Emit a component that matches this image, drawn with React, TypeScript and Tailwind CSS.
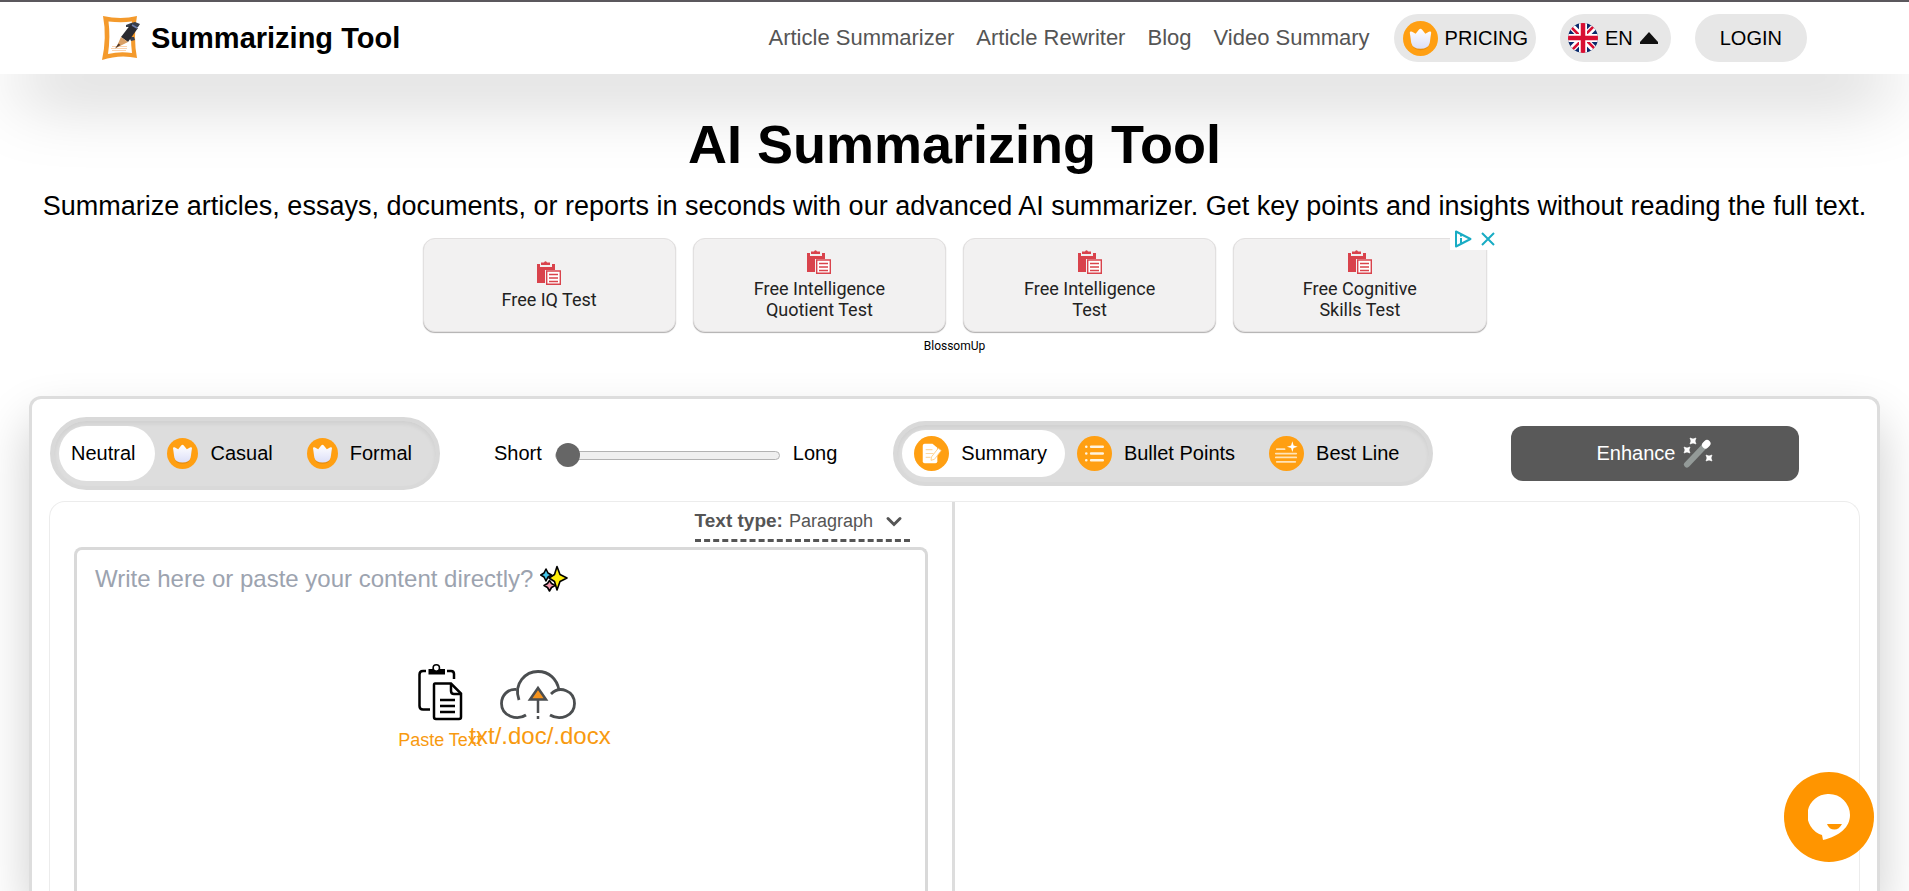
import type { ReactNode } from "react";

const FONT = "font-['Liberation_Sans',Arial,sans-serif]";

function LogoMark() {
  return (
    <svg width="40" height="46" viewBox="0 0 40 46" aria-hidden="true">
      <path d="M1 1Q19 5 35 1Q31 22 35 43Q18 39 0 45Q5 22 1 1Z" fill="#f49a2c" />
      <path d="M6.500 6.500Q19 8 30 6.500Q28 22 30 38Q18 36 6 39Q8.500 22 6.500 6.500Z" fill="#fff" />
      <path d="M10 31.500H25M9 33.500H25M10 35.500H24" stroke="#fbd3ae" strokeWidth="1" />
      <path d="M24 10L29 8L33 7L38 9L36 12H24ZM27 22L32 22L33 25L29 26Z" fill="#39404d" />
      <path d="M29 9L36 13L26 27L19 22Z" fill="#2a2b31" />
      <path d="M19 22L26 27L14 33Z" fill="#d9a066" />
      <path d="M16.500 28.500L18.500 30L13 33.500Z" fill="#50382a" />
      <path d="M30 10L35 13" stroke="#6f7fae" strokeWidth="1.500" />
    </svg>
  );
}

function Crown({ className }: { className: string }) {
  return (
    <svg className={className} viewBox="0 0 36 36" aria-hidden="true">
      <defs>
        <linearGradient id="crownFill" x1="0" y1="0" x2="0" y2="1">
          <stop offset="0" stopColor="#fff" />
          <stop offset="1" stopColor="#dcdff8" />
        </linearGradient>
      </defs>
      <circle cx="18" cy="18" r="18" fill="#ff9f12" />
      <path
        d="M7.500 13.500C7.500 12 9.500 12 10.500 12.800L13 14.200L16.500 9.700Q18 8 19.500 9.700L23 14.200L25.500 12.800C27 12 28.700 12 28.700 13.500L27 24Q25.500 30 18 30Q10.500 30 9 24Z"
        fill="#c9780c"
        opacity=".45"
      />
      <path
        d="M7 12C7 10.500 9 10.500 10.300 11.500L13 13L16.500 8.800Q18 7 19.500 8.800L23 13L25.700 11.500C27 10.500 29 10.500 29 12L27.500 22.500Q26 28.500 18 28.500Q10 28.500 8.500 22.500Z"
        fill="url(#crownFill)"
      />
    </svg>
  );
}

function UkFlag() {
  return (
    <svg width="30" height="30" viewBox="0 0 60 60" aria-hidden="true">
      <clipPath id="flagDisc">
        <circle cx="30" cy="30" r="30" />
      </clipPath>
      <g clipPath="url(#flagDisc)">
        <rect width="60" height="60" fill="#0a2a6c" />
        <path d="M0 0L60 60M60 0L0 60" stroke="#fff" strokeWidth="13" />
        <path d="M0 2L28 30M60 58L32 30M58 0L30 28M2 60L30 32" stroke="#d80f32" strokeWidth="5" />
        <path d="M30 0V60M0 30H60" stroke="#fff" strokeWidth="16" />
        <path d="M30 0V60M0 30H60" stroke="#d80f32" strokeWidth="9" />
      </g>
    </svg>
  );
}

function AdClipboard() {
  return (
    <svg width="24" height="24" viewBox="0 0 24 24" aria-hidden="true">
      <path d="M0 3H3V6H15V3H18V9H8V22H0Z" fill="#d9434c" />
      <path d="M4 1.500H7Q8.500 -1 10 1.500H13V4H4Z" fill="#d9434c" />
      <path d="M9.700 10H23.300V23.300H9.700Z" fill="#fff" stroke="#d9434c" strokeWidth="1.400" />
      <path d="M12 13.500H21M12 17H21M12 20.500H21" stroke="#d9434c" strokeWidth="1.300" />
    </svg>
  );
}

function SummaryIcon() {
  return (
    <svg className="size-[35px]" viewBox="0 0 36 36" aria-hidden="true">
      <circle cx="18" cy="18" r="18" fill="#ff9f12" />
      <path d="M11 8H19L24 12V26Q24 28 22 28H11Q9 28 9 26V10Q9 8 11 8Z" fill="#fff" />
      <path d="M12 14H19M12 18H20M12 22H17" stroke="#fbd9a5" strokeWidth="1.200" />
      <path d="M25 12.500L28 15L21 24L17.500 25L18 21.500Z" fill="#fff" stroke="#ffc570" strokeWidth=".8" />
    </svg>
  );
}

function BulletsIcon() {
  return (
    <svg className="size-[35px]" viewBox="0 0 36 36" aria-hidden="true">
      <circle cx="18" cy="18" r="18" fill="#ff9f12" />
      <path d="M14.500 11H26.500M14.500 18H26.500M14.500 25H26.500" stroke="#fff4e0" strokeWidth="2.600" strokeLinecap="round" />
      <path d="M9.500 11H9.600M9.500 18H9.600M9.500 25H9.600" stroke="#fff4e0" strokeWidth="2.600" strokeLinecap="round" />
    </svg>
  );
}

function BestLineIcon() {
  return (
    <svg className="size-[35px]" viewBox="0 0 36 36" aria-hidden="true">
      <circle cx="18" cy="18" r="18" fill="#ff9f12" />
      <path d="M8 13.500H16M7 18H28M7 22H28M8 26.500H27" stroke="#ffe3b8" strokeWidth="1.800" strokeLinecap="round" />
      <path d="M24 5.500L25.300 9.700L29.500 11L25.300 12.300L24 16.500L22.700 12.300L18.500 11L22.700 9.700Z" fill="#fff" />
    </svg>
  );
}

function Wand() {
  return (
    <svg width="30" height="32" viewBox="0 0 30 32" aria-hidden="true">
      <path d="M4 27.500L23 7.500" stroke="#939a98" strokeWidth="6" strokeLinecap="round" />
      <path d="M22.500 8L24 6.500" stroke="#fff" strokeWidth="7" strokeLinecap="round" />
      <path
        d="M7 1L10 2L13 1L12 4L13 7L10 6L7 7L8 4ZM1 10L4 11L7 10L6 13L7 16L4 15L1 16L2 13ZM23 18L26 19L29 18L28 21L29 24L26 23L23 24L24 21Z"
        fill="#fff"
        stroke="#fff"
        strokeWidth=".6"
      />
    </svg>
  );
}

function Sparkles() {
  return (
    <svg width="28" height="28" viewBox="0 0 28 28" aria-hidden="true">
      <g stroke="#000" strokeWidth="1.600" strokeLinejoin="round">
        <path d="M6 4L8 8L11.500 10L8 12L6 16L4 12L0.800 10L4 8Z" fill="#45c4e8" />
        <path d="M9.500 15.500L11.500 18.500L15 20.500L11.500 22.500L9.500 26L7.500 22.500L4 20.500L7.500 18.500Z" fill="#f59ab0" />
        <path d="M17 1.500L20 9.500L27 13L20 16.500L17 25L14.500 16.500L9 13L14.500 9.500Z" fill="#ffee0a" />
      </g>
    </svg>
  );
}

function PasteIcon() {
  return (
    <svg width="45" height="57" viewBox="0 0 45 57" fill="none" stroke="#000" aria-hidden="true">
      <path d="M8 7H5Q1.500 7 1.500 10.500V42Q1.500 45.500 5 45.500H12" strokeWidth="2.500" />
      <path d="M29 7H33Q36 7 36 10V15" strokeWidth="2.500" />
      <path d="M10.500 5H14.500A4 4 0 0 1 22 5H27V10.500H10.500Z" fill="#000" stroke="none" />
      <circle cx="18.300" cy="4" r="3.200" fill="#fff" strokeWidth="1.500" />
      <path d="M17 19.500H33L43 29.500V53Q43 55 41 55H18Q16 55 16 53V21Q16 19.500 17 19.500Z" strokeWidth="2.500" />
      <path d="M33 20V27Q33 30 36 30H43" strokeWidth="2.500" />
      <path d="M22 36H37M22 42H37M22 48H37" strokeWidth="2.500" />
    </svg>
  );
}

function CloudIcon() {
  return (
    <svg width="76" height="50" viewBox="0 0 76 50" fill="none" stroke="#4b4e50" aria-hidden="true">
      <path d="M26 45C17 51 1.500 46 1.500 33.500C1.500 25 8 19 16 19.500" strokeWidth="2.800" />
      <path d="M19 30C13 13 26 1.500 38 1.500C49 1.500 57 9 59 20" strokeWidth="2.800" />
      <path d="M51 24C60 15 74.500 21 74.500 33.500C74.500 46 60 51 50 45" strokeWidth="2.800" />
      <path d="M38 18L46 29.500H30Z" fill="#f7941d" strokeWidth="2.500" />
      <path d="M38 30V43M38 46V49" strokeWidth="2.500" />
    </svg>
  );
}

const NAV = ["Article Summarizer", "Article Rewriter", "Blog", "Video Summary"];
const ADS = [["Free IQ Test"], ["Free Intelligence", "Quotient Test"], ["Free Intelligence", "Test"], ["Free Cognitive", "Skills Test"]];

function Header() {
  return (
    <header className="border-t-2 border-[#5b585d] bg-white shadow-[0_40px_70px_-20px_rgba(0,0,0,0.26)]">
      <div className="flex h-18 items-center justify-between px-[102px]">
        <a href="#" className="flex items-center gap-[9px] text-[29px] font-bold">
          <LogoMark />
          Summarizing Tool
        </a>
        <nav className="flex items-center gap-6 text-xl">
          <div className="flex items-center gap-[22px] text-[22px] text-[#555]">
            {NAV.map((item) => (
              <a key={item} href="#">
                {item}
              </a>
            ))}
          </div>
          <a href="#" className="flex h-12 items-center gap-[7px] rounded-full bg-[#e7e7e7] pr-2 pl-[9px]">
            <Crown className="size-[35px]" />
            PRICING
          </a>
          <button type="button" className="flex h-12 items-center gap-[7px] rounded-full bg-[#e7e7e7] pr-[13px] pl-2">
            <UkFlag />
            EN
            <svg width="18" height="12" viewBox="0 0 18 12" aria-hidden="true">
              <path d="M9 0L18 10V12H0V10Z" fill="#111" />
            </svg>
          </button>
          <a href="#" className="flex h-12 items-center rounded-full bg-[#e7e7e7] px-[25px]">
            LOGIN
          </a>
        </nav>
      </div>
    </header>
  );
}

function AdStrip() {
  return (
    <aside className="relative mx-auto mt-3 w-[1064px] font-[Roboto,sans-serif] text-[#222]">
      <ul className="grid grid-cols-4 gap-[17px]">
        {ADS.map((lines) => (
          <li key={lines.join(" ")}>
            <a
              href="#"
              className="flex h-[94px] flex-col items-center justify-center gap-1 rounded-xl border border-[#e2e0e0] bg-[#f2f1f1] text-lg leading-[21px] shadow-[0_1px_1px_#b0aeae]"
            >
              <AdClipboard />
              <span className="text-center">
                {lines.map((line) => (
                  <span key={line} className="block">
                    {line}
                  </span>
                ))}
              </span>
            </a>
          </li>
        ))}
      </ul>
      <p className="mt-[6px] text-center text-xs leading-4 text-black">BlossomUp</p>
      <div className="absolute -top-[10px] -right-[13px] flex items-center gap-2 bg-white px-1 py-[2px]">
        <svg width="18" height="18" viewBox="0 0 18 18" fill="none" stroke="#19acc4" strokeWidth="2" aria-hidden="true">
          <path d="M2 1.500V16.500L16.500 9Z" strokeLinejoin="round" />
          <path d="M7 5V6.500M7 8V13" />
        </svg>
        <button type="button" aria-label="Close ad">
          <svg width="16" height="18" viewBox="0 0 16 18" stroke="#19acc4" strokeWidth="2" aria-hidden="true">
            <path d="M2 3L14 15M14 3L2 15" />
          </svg>
        </button>
      </div>
    </aside>
  );
}

function Segments({ children, className }: { children: ReactNode; className: string }) {
  return (
    <div
      className={`${className} flex rounded-full border-4 border-[#d9d9d9] bg-[#ddd] p-[5px] shadow-[inset_0_3px_4px_rgba(0,0,0,0.06)]`}
    >
      {children}
    </div>
  );
}

function Toolbar() {
  return (
    <div className="flex h-[102px] items-center pt-[6px] pr-[78px] pl-[18px]">
      <Segments className="h-[73px] w-[390px]">
        <button type="button" className="rounded-full bg-white pr-5 pl-3">
          Neutral
        </button>
        <button type="button" className="ml-3 flex items-center gap-3">
          <Crown className="size-[31px]" />
          Casual
        </button>
        <button type="button" className="ml-[34px] flex items-center gap-3">
          <Crown className="size-[31px]" />
          Formal
        </button>
      </Segments>
      <div className="ml-[54px] flex items-center gap-[13px]">
        <label htmlFor="length">Short</label>
        <input
          id="length"
          type="range"
          min={0}
          max={10}
          defaultValue={0}
          className="mt-1 h-[9px] w-[225px] appearance-none rounded-full border border-[#b2b2b2] bg-[#efefef] [&::-webkit-slider-thumb]:size-6 [&::-webkit-slider-thumb]:appearance-none [&::-webkit-slider-thumb]:rounded-full [&::-webkit-slider-thumb]:bg-[#666]"
        />
        <span>Long</span>
      </div>
      <Segments className="ml-14 h-[65px] w-[540px]">
        <button type="button" className="flex items-center gap-3 rounded-full bg-white pr-[18px] pl-3">
          <SummaryIcon />
          Summary
        </button>
        <button type="button" className="ml-3 flex items-center gap-3">
          <BulletsIcon />
          Bullet Points
        </button>
        <button type="button" className="ml-[34px] flex items-center gap-3">
          <BestLineIcon />
          Best Line
        </button>
      </Segments>
      <button
        type="button"
        className="ml-auto flex h-[55px] w-[288px] items-center justify-center gap-2 rounded-xl bg-[#595959] text-white"
      >
        Enhance
        <Wand />
      </button>
    </div>
  );
}

function Editor() {
  return (
    <div className="mx-[17px] flex min-h-0 flex-1 rounded-t-2xl border border-b-0 border-[#ececec]">
      <section className="flex w-[905px] flex-col border-r-[3px] border-[#ddd] px-6">
        <button
          type="button"
          className="mr-[18px] flex h-10 items-center self-end border-b-[3px] border-dashed border-[#555] pr-[7px] text-lg text-[#555]"
        >
          <b className="text-[19px]">Text type:</b>
          <span className="ml-[6px]">Paragraph</span>
          <svg className="ml-3" width="18" height="12" viewBox="0 0 18 12" fill="none" stroke="#555" strokeWidth="3" aria-hidden="true">
            <path d="M3 3.500L9 9.500L15 3.500" strokeLinecap="round" />
          </svg>
        </button>
        <div className="relative mt-[5px] flex-1 rounded-t-lg border-[3px] border-b-0 border-[#d9d9d9]">
          <textarea aria-label="Content" className="absolute inset-0 size-full resize-none outline-none" />
          <div className="pointer-events-none absolute top-[14px] left-[18px] flex items-center gap-[7px] text-2xl leading-[30px] text-[#9ca3af]">
            Write here or paste your content directly?
            <Sparkles />
          </div>
          <div className="absolute top-[114px] left-[320px] flex items-start text-[#f89a10]">
            <button type="button" className="flex w-[86px] flex-col items-center gap-[7px] text-lg leading-6 whitespace-nowrap">
              <PasteIcon />
              Paste Text
            </button>
            <button type="button" className="ml-4 mt-[6px] flex w-[78px] flex-col items-center gap-[2px] text-2xl leading-7 whitespace-nowrap">
              <CloudIcon />
              <span className="pl-1">txt/.doc/.docx</span>
            </button>
          </div>
        </div>
      </section>
      <section className="flex-1" aria-label="Summary output" />
    </div>
  );
}

export default function App() {
  return (
    <div className={`${FONT} flex h-screen flex-col overflow-hidden bg-white text-xl text-black`}>
      <Header />
      <main className="flex min-h-0 flex-1 flex-col">
        <h1 className="mt-9 text-center text-[54px] leading-[68px] font-bold">AI Summarizing Tool</h1>
        <p className="mt-2 text-center text-[27px] leading-10 whitespace-nowrap">
          Summarize articles, essays, documents, or reports in seconds with our advanced AI summarizer. Get key points and
          insights without reading the full text.
        </p>
        <AdStrip />
        <div className="mx-[29px] mt-[42px] flex min-h-0 flex-1 flex-col rounded-t-xl border-[3px] border-b-0 border-[#ddd] bg-white shadow-[0_25px_50px_rgba(0,0,0,0.2)]">
          <Toolbar />
          <Editor />
        </div>
      </main>
      <button
        type="button"
        aria-label="Open chat"
        className="fixed right-[35px] bottom-[29px] flex size-[90px] items-center justify-center rounded-full bg-[#ff9500]"
      >
        <svg width="42" height="46" viewBox="0 0 42 46" aria-hidden="true">
          <path d="M21 0A21 21 0 0 1 42 21C42 33 32 42 15 46L14 41A21 21 0 0 1 21 0Z" fill="#fff" />
          <path d="M19 30H34Q31 35.500 26.500 35.500Q21 35.500 19 30Z" fill="#ff9500" />
        </svg>
      </button>
    </div>
  );
}
